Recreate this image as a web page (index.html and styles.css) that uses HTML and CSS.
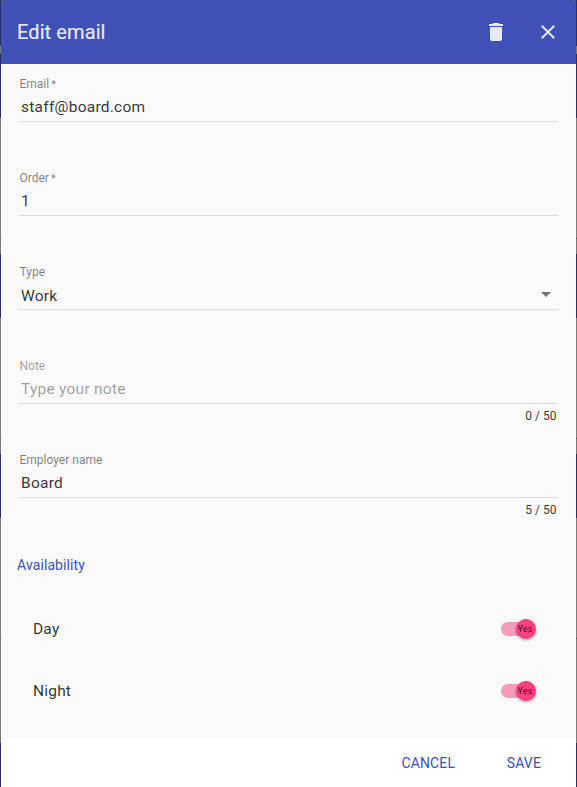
FILE: index.html
```html
<!DOCTYPE html>
<html lang="en">
<head>
<meta charset="utf-8">
<title>Edit email</title>
<link rel="stylesheet" href="styles.css">
</head>
<body>
<form class="dialog">
  <header class="toolbar">
    <h2>Edit email</h2>
    <button type="button" class="icon" aria-label="Delete"><svg viewBox="0 0 24 24"><path d="M6 19c0 1.100.9 2 2 2h8c1.100 0 2-.9 2-2V7H6v12zM19 4h-3.500l-1-1h-5l-1 1H5v2h14V4z"/></svg></button>
    <button type="button" class="icon" aria-label="Close"><svg viewBox="0 0 24 24"><path d="M19 6.410L17.590 5 12 10.590 6.410 5 5 6.410 10.590 12 5 17.590 6.410 19 12 13.410 17.590 19 19 17.590 13.410 12z"/></svg></button>
  </header>
  <main class="content">
    <div class="field"><label>Email <span class="star">*</span></label><div class="value">staff@board.com</div></div>
    <div class="field"><label>Order <span class="star">*</span></label><div class="value">1</div></div>
    <div class="field"><label>Type</label><div class="value select"><span class="choice">Work</span><span class="arrow"></span></div></div>
    <div class="field"><label class="faint">Note</label><div class="value placeholder">Type your note</div><div class="counter">0 / 50</div></div>
    <div class="field"><label>Employer name</label><div class="value">Board</div><div class="counter">5 / 50</div></div>
    <h3>Availability</h3>
    <div class="row"><span>Day</span><div class="switch"><span class="thumb">Yes</span></div></div>
    <div class="row"><span>Night</span><div class="switch"><span class="thumb">Yes</span></div></div>
  </main>
  <footer class="actions">
    <button type="button">CANCEL</button>
    <button type="button">SAVE</button>
  </footer>
</form>
</body>
</html>
```

FILE: styles.css
```css
* { box-sizing: border-box; }
body {
  margin: 0;
  height: 787px;
  padding: 0 1px;
  overflow: hidden;
  font-family: Roboto, sans-serif;
  color: rgba(0, 0, 0, 0.8);
  background: linear-gradient(#293066 0 46px, #797979 46px 54px, #293066 54px 118px, #7c7c7c 118px 238px, #555 238px 239px, #797979 239px 254px, #293066 254px 318px, #7c7c7c 318px 438px, #555 438px 439px, #797979 439px 454px, #293066 454px 518px, #7c7c7c 518px 638px, #555 638px 639px, #7c7c7c 639px 743px, #293066 743px);
}
button { border: 0; padding: 0; background: none; font-family: inherit; }
.dialog {
  height: 787px;
  display: flex;
  flex-direction: column;
  background: #fafafa;
  border-radius: 4px 4px 0 0;
  overflow: hidden;
}
.toolbar {
  height: 64px;
  flex: none;
  display: flex;
  align-items: center;
  padding: 0 8px 0 16px;
  background: #3f51b5;
  color: rgba(255, 255, 255, 0.87);
}
.toolbar h2 { flex: 1; margin: 0; font-size: 20px; font-weight: 400; letter-spacing: 0.1px; -webkit-text-stroke: 0.2px; }
.icon { width: 40px; height: 40px; margin-left: 12px; display: grid; place-items: center; color: inherit; }
.icon svg { width: 24px; height: 24px; fill: currentColor; }
.content { flex: 1; }
.field { height: 94px; margin: 0 18px; padding-top: 12px; }
.field label { display: block; height: 16px; padding-left: 0.500px; font-size: 12px; line-height: 16px; color: rgba(0, 0, 0, 0.5); }
.field .faint { color: rgba(0, 0, 0, 0.38); }
.star { margin-left: -1px; font-size: 11px; }
.value { height: 30px; padding: 0 2px; border-bottom: 1px solid #dcdcdc; font-size: 15.5px; line-height: 30px; letter-spacing: 0.25px; }
.field .placeholder { color: rgba(0, 0, 0, 0.38); }
.select { display: flex; justify-content: space-between; align-items: center; }
.choice { padding-top: 2px; }
.arrow { margin-right: 5px; border: 5px solid transparent; border-top-color: #757575; border-bottom: 0; }
.counter { padding: 5px 1.500px 0; font-size: 12px; line-height: 14px; text-align: right; }
.content h3 { margin: 23px 16px 0; font-size: 14px; line-height: 16px; font-weight: 400; letter-spacing: 0.1px; color: #3f51b5; }
.row { height: 62px; padding: 0 41px 0 32px; display: flex; align-items: center; justify-content: space-between; font-size: 15.5px; line-height: 18px; letter-spacing: 0.2px; }
.content h3 + .row { margin-top: 25px; }
.switch { width: 34px; height: 14px; display: flex; align-items: center; border-radius: 7px; background: #fb9bbc; }
.thumb { flex: none; width: 20px; height: 20px; margin-left: 15px; border-radius: 50%; background: #ff4081; box-shadow: 0 1px 3px rgba(0, 0, 0, 0.4); font-size: 9px; line-height: 20px; letter-spacing: 0.2px; text-indent: -2px; text-align: center; }
.actions { flex: none; height: 49px; padding: 1px 35px 0 0; display: flex; justify-content: flex-end; gap: 51.500px; background: #fff; }
.actions button { font-size: 14px; letter-spacing: 0.15px; color: #3f51b5; }
```
